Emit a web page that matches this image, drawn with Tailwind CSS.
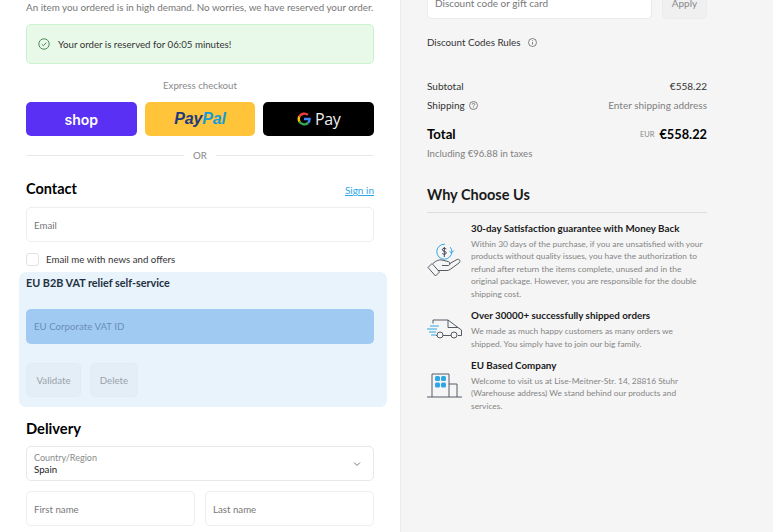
<!DOCTYPE html>
<html lang="en"><head><meta charset="utf-8">
<script src="https://cdn.jsdelivr.net/npm/@tailwindcss/browser@4"></script>
</head>
<body class="bg-white">
<div class="w-[773px] h-[532px] overflow-hidden flex font-['Lato','Noto_Sans',sans-serif] text-[#1a1a1a]">
  <main class="w-[400px] shrink-0 px-[26px] bg-white flex flex-col">
    <p class="h-[14px] text-[9.830px] leading-[14px] text-[#777] whitespace-nowrap">An item you ordered is in high demand. No worries, we have reserved your order.</p>
    <div class="mt-[10px] h-[40px] rounded-[5px] border border-[#c9f2cd] bg-[#e8f9e9] flex items-center pl-[11px] gap-[8px] text-[9.700px] text-[#333]">
      <svg class="w-[12px] h-[12px]" viewBox="0 0 12 12" fill="none" stroke="#4e8a5a" stroke-width="1"><circle cx="6" cy="6" r="5.2"/><path d="M3.8 6.2l1.6 1.5 2.9-3.1"/></svg>
      <span>Your order is reserved for 06:05 minutes!</span>
    </div>
    <p class="mt-[14px] text-center text-[9.700px] leading-[14px] text-[#8a8a8a]">Express checkout</p>
    <div class="mt-[10px] grid grid-cols-3 gap-[8px] h-[34px]">
      <div class="rounded-[5px] bg-[#5a31f4] flex items-center justify-center text-white font-semibold text-[14px] font-['Inter',sans-serif]">shop</div>
      <div class="rounded-[5px] bg-[#ffc439] flex items-center justify-center font-['Liberation_Sans',sans-serif] italic font-bold text-[16px] tracking-[-0.2px]"><span class="text-[#1c3a7d]">Pay</span><span class="text-[#179bd7]">Pal</span></div>
      <div class="rounded-[5px] bg-black flex items-center justify-center gap-[4px] text-[#eeeeee] text-[16px]">
        <svg class="w-[14px] h-[14px]" viewBox="0 0 14 14" fill="none" stroke-width="2.4"><path d="M7 7h5.6a5.7 5.7 0 0 1-1.6 4" stroke="#4285f4"/><path d="M11 11a5.7 5.7 0 0 1-8.600-1.400" stroke="#34a853"/><path d="M2.400 9.600a5.700 5.700 0 0 1 0-5.200" stroke="#fbbc05"/><path d="M2.400 4.400a5.700 5.700 0 0 1 8.500-1.500" stroke="#ea4335"/></svg>
        <span class="font-['Open_Sans',sans-serif] tracking-[-0.4px]">Pay</span>
      </div>
    </div>
    <div class="mt-[12px] h-[14px] flex items-center gap-[10px] text-[9.700px] text-[#888]"><div class="flex-1 h-px bg-[#e8e8e8]"></div><span class="w-[12px] flex justify-center">OR</span><div class="flex-1 h-px bg-[#e8e8e8]"></div></div>
    <div class="mt-[16px] h-[22px] flex items-center justify-between">
      <h2 class="text-[14.500px] font-bold text-black">Contact</h2>
      <a class="text-[10px] text-[#2ea6e6] underline mt-[3px]">Sign in</a>
    </div>
    <div class="mt-[7px] h-[35px] rounded-[5px] border border-[#eeeeee] flex items-center px-[7px] pt-[1px] text-[9.700px] text-[#777]">Email</div>
    <label class="mt-[10px] h-[14px] flex items-center gap-[7px] text-[9.700px] text-[#333]"><span class="w-[13px] h-[13px] rounded-[3px] border border-[#e2e2e2] bg-white"></span>Email me with news and offers</label>
    <section class="mt-[6px] -ml-[7px] -mr-[13px] h-[135px] rounded-[7px] bg-[#e8f3fc] pl-[7px] pr-[13px] flex flex-col">
      <h3 class="mt-[4px] text-[10.800px] leading-[14px] font-bold text-[#243040]">EU B2B VAT relief self-service</h3>
      <div class="mt-[19px] h-[35px] rounded-[5px] bg-[#a1caf2] flex items-center px-[8px] text-[9.700px] text-[#6a8fb8]">EU Corporate VAT ID</div>
      <div class="mt-[19px] flex gap-[9px] text-[9.700px] text-[#9aa2aa]">
        <button class="h-[34px] w-[55px] rounded-[5px] bg-[#e4eef7] border border-[#e0ebf5]">Validate</button>
        <button class="h-[34px] w-[48px] rounded-[5px] bg-[#e4eef7] border border-[#e0ebf5]">Delete</button>
      </div>
    </section>
    <h2 class="mt-[10px] h-[22px] leading-[22px] text-[14.700px] font-bold text-black">Delivery</h2>
    <div class="mt-[7px] h-[35px] rounded-[5px] border border-[#e8e8e8] flex items-center justify-between pl-[7px] pr-[12px]">
      <div class="flex flex-col"><span class="text-[9px] leading-[11px] text-[#8a8a8a]">Country/Region</span><span class="text-[9.700px] leading-[13px] text-[#222]">Spain</span></div>
      <svg class="w-[8px] h-[6px]" viewBox="0 0 8 6" fill="none" stroke="#777" stroke-width="1"><path d="M1 1.500l3 3 3-3"/></svg>
    </div>
    <div class="mt-[10px] grid grid-cols-[169px_169px] gap-[10px]">
      <div class="h-[35px] rounded-[5px] border border-[#eeeeee] flex items-center px-[7px] pt-[1px] text-[9.700px] text-[#777]">First name</div>
      <div class="h-[35px] rounded-[5px] border border-[#eeeeee] flex items-center px-[7px] pt-[1px] text-[9.700px] text-[#777]">Last name</div>
    </div>
  </main>
  <aside class="flex-1 bg-[#f5f5f5] border-l border-[#ebebeb] pl-[26px] pr-[66px] flex flex-col">
    <div class="-mt-[16px] h-[35px] flex gap-[10px] text-[10px]">
      <div class="flex-1 rounded-[5px] border border-[#ebebeb] bg-white flex items-center px-[7px] text-[#777] pt-[4px]">Discount code or gift card</div>
      <div class="w-[45px] rounded-[5px] border border-[#ebebeb] bg-[#f0f0f0] flex items-center justify-center text-[#888] pt-[4px]">Apply</div>
    </div>
    <div class="mt-[16px] h-[14px] flex items-center gap-[7px] text-[9.800px] text-[#333]">Discount Codes Rules
      <svg class="w-[9px] h-[9px]" viewBox="0 0 9 9" fill="none" stroke="#555" stroke-width=".7"><circle cx="4.500" cy="4.500" r="4"/><path d="M4.500 4v2.600M4.500 2.200v.8"/></svg>
    </div>
    <div class="mt-[30px] h-[14px] flex justify-between items-center text-[10px] text-[#333]"><span>Subtotal</span><span>€558.22</span></div>
    <div class="mt-[5px] h-[14px] flex justify-between items-center text-[10px] text-[#333]">
      <span class="flex items-center gap-[4px]">Shipping <svg class="w-[9px] h-[9px]" viewBox="0 0 9 9" fill="none" stroke="#555" stroke-width=".7"><circle cx="4.500" cy="4.500" r="4"/><path d="M3.300 3.500a1.200 1.200 0 1 1 1.800 1c-.4.300-.6.500-.6 1M4.500 6.400v.7"/></svg></span>
      <span class="text-[#808080]">Enter shipping address</span></div>
    <div class="mt-[13px] h-[20px] flex justify-between items-center">
      <span class="text-[13.200px] font-bold text-black">Total</span>
      <span class="flex items-center gap-[5px]"><span class="text-[7.500px] text-[#888]">EUR</span><span class="text-[12.800px] font-bold text-black">€558.22</span></span>
    </div>
    <p class="mt-[2px] h-[14px] leading-[14px] text-[9.600px] text-[#808080]">Including €96.88 in taxes</p>
    <h2 class="mt-[22px] h-[24px] leading-[24px] text-[14.500px] font-bold text-[#1a1a1a]">Why Choose Us</h2>
    <div class="mt-[5px] h-px bg-[#dddddd]"></div>

    <div class="mt-[9px] flex gap-[9px]">
      <svg class="w-[35px] h-[35px] shrink-0 mt-[20px]" viewBox="0 0 35 35" fill="none" stroke-width="1">
        <circle cx="17.300" cy="9.700" r="7.500" stroke="#2ea6e6" stroke-dasharray="36 6"/><path d="M22.500 9.500l2.300 1.300 2-2.300" stroke="#2ea6e6"/><path d="M19.300 7c-1-1-4-1-4 .8s4 1.200 4 3-3 1.800-4 .7M17.300 5v10" stroke="#445"/>
        <path d="M1 25.500l4-4 7.500 8.500-4 4z" stroke="#555b63" stroke-linejoin="round"/><path d="M6 21.500c3-3 6-4 9-3.500l6 1.500c2.500.5 2.500 4 0 4h-6M22 22l8-4.500c2.500-1 4 1.500 2 3.500l-9 6.500c-1 .7-2 1-3 1h-9" stroke="#555b63"/>
      </svg>
      <div class="min-w-0 pr-[3px]">
        <h4 class="text-[9.800px] leading-[13px] font-bold text-[#1a1a1a] whitespace-nowrap">30-day Satisfaction guarantee with Money Back</h4>
        <p class="mt-[2.500px] text-[8.400px] leading-[12.600px] text-[#858585]">Within 30 days of the purchase, if you are unsatisfied with your products without quality issues, you have the authorization to refund after return the items complete, unused and in the original package. However, you are responsible for the double shipping cost.</p>
      </div>
    </div>
    <div class="mt-[9px] flex gap-[9px]">
      <svg class="w-[35px] h-[20px] shrink-0 mt-[10px]" viewBox="0 0 35 20" fill="none" stroke-width="1">
        <path d="M3 7h9M0 10h10M2 13h7M4 16h5" stroke="#2ea6e6"/><path d="M6 4.500V1h15l10 7.500 3.500 2.500v5.500h-3.500M21 1v7.500h10M24 16.500h-8M10 16.500H9" stroke="#555b63"/><circle cx="13" cy="16" r="3" stroke="#555b63"/><circle cx="27" cy="16" r="3" stroke="#555b63"/>
      </svg>
      <div class="min-w-0 pr-[3px]">
        <h4 class="text-[9.800px] leading-[13px] font-bold text-[#1a1a1a] whitespace-nowrap">Over 30000+ successfully shipped orders</h4>
        <p class="mt-[2.500px] text-[8.400px] leading-[12.600px] text-[#858585]">We made as much happy customers as many orders we shipped. You simply have to join our big family.</p>
      </div>
    </div>
    <div class="mt-[9px] flex gap-[9px]">
      <svg class="w-[35px] h-[25px] shrink-0 mt-[14px]" viewBox="0 0 35 25" fill="none" stroke-width="1">
        <path d="M0 24h35M5 24V1h17v23M22 11h8v13" stroke="#555b63"/>
        <g fill="#2ea6e6"><rect x="8" y="3" width="5" height="5" rx="1.500"/><rect x="14" y="3" width="5" height="5" rx="1.500"/><rect x="8" y="9.500" width="5" height="5" rx="1.500"/><rect x="14" y="9.500" width="5" height="5" rx="1.500"/></g>
      </svg>
      <div class="min-w-0 pr-[3px]">
        <h4 class="text-[9.800px] leading-[13px] font-bold text-[#1a1a1a] whitespace-nowrap">EU Based Company</h4>
        <p class="mt-[2.500px] text-[8.400px] leading-[12.600px] text-[#858585]">Welcome to visit us at Lise-Meitner-Str. 14, 28816 Stuhr (Warehouse address) We stand behind our products and services.</p>
      </div>
    </div>
  </aside>
</div>
</body></html>
